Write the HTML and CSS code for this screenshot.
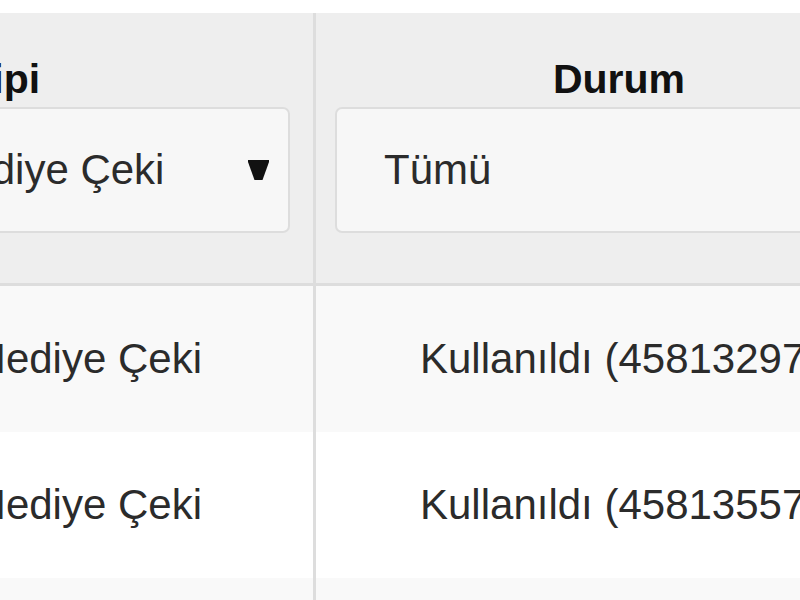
FILE: index.html
```html
<!DOCTYPE html>
<html lang="tr">
<head>
<meta charset="utf-8">
<title>Kuponlar</title>
<link rel="stylesheet" href="styles.css">
</head>
<body>
<div class="viewport">
  <div class="grid">
    <div class="th c1">
      <div class="label">Kupon Tipi</div>
      <div class="select s1"><span>Hediye Çeki</span><svg class="caret" width="21" height="20" viewBox="0 0 21 20"><path d="M0 0H21V2L14.5 20H6.5L0 2Z" fill="#111"/></svg></div>
    </div>
    <div class="th c2">
      <div class="label">Durum</div>
      <div class="select"><span>Tümü</span><svg class="caret" width="21" height="20" viewBox="0 0 21 20"><path d="M0 0H21V2L14.5 20H6.5L0 2Z" fill="#111"/></svg></div>
    </div>

    <div class="td c1 odd">Hediye Çeki</div>
    <div class="td c2 odd">Kullanıldı (458132976)</div>

    <div class="td c1">Hediye Çeki</div>
    <div class="td c2">Kullanıldı (458135571)</div>

    <div class="td c1 odd">Hediye Çeki</div>
    <div class="td c2 odd">Kullanıldı (458136024)</div>
  </div>
</div>
</body>
</html>
```

FILE: styles.css
```css
html, body {
  margin: 0;
  padding: 0;
  background: #ffffff;
}

.viewport {
  width: 800px;
  height: 600px;
  overflow: hidden;
  padding-top: 13px;
  box-sizing: border-box;
  font-family: "Liberation Sans", Arial, sans-serif;
  font-size: 42px;
  line-height: 48px;
  color: #2b2b2b;
}

.grid {
  display: grid;
  grid-template-columns: 771px 610px;
  margin-left: -455px;
  width: 1381px;
}

.c1 {
  border-right: 3px solid #dddddd;
}

.th {
  background: #eeeeee;
  border-bottom: 3px solid #dddddd;
  padding: 42px 23px 50px 19px;
  display: flex;
  flex-direction: column;
}

.th.c1 {
  padding-left: 32px;
}

.label {
  font-weight: bold;
  font-size: 41px;
  color: #111111;
  text-align: center;
  margin-bottom: 4px;
}

.select {
  height: 126px;
  box-sizing: border-box;
  background: #f7f7f7;
  border: 2px solid #dddddd;
  border-radius: 7px;
  display: flex;
  align-items: center;
  justify-content: space-between;
  padding: 0 19px 0 47px;
  color: #2b2b2b;
}

.select.s1 {
  width: 401px;
  align-self: flex-end;
}

.caret {
  display: block;
  flex: none;
}

.td {
  height: 146px;
  box-sizing: border-box;
  padding: 49px 0;
  background: #ffffff;
  white-space: nowrap;
}

.td.odd {
  background: #f9f9f9;
}

.td.c1 {
  text-align: right;
  padding-right: 111px;
}

.td.c2 {
  padding-left: 104px;
}
```
